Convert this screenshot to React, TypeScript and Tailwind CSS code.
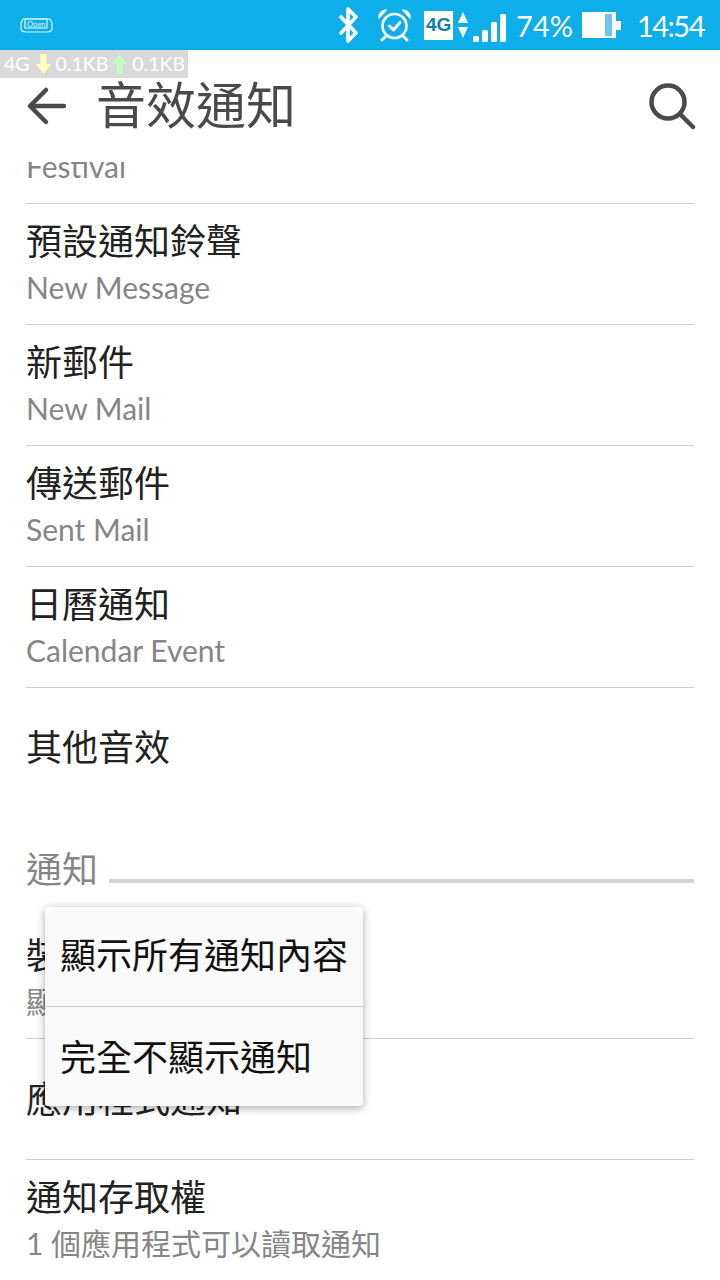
import { FC } from "react";

const cjk = "font-['Lato','Noto_Sans_CJK_TC',sans-serif]";

interface RowProps {
  title?: string;
  sub?: string;
}

const Row: FC<RowProps> = ({ title, sub }) => {
  return (
    <div className="h-[121px] border-b border-[#d2d2d2] flex flex-col justify-center">
      {title && <div className="text-[36px] leading-[46px] text-[#222222]">{title}</div>}
      {sub && <div className="text-[30px] leading-[46px] text-[#868686]">{sub}</div>}
    </div>
  );
};

const StatusBar = () => {
  return (
    <div className="h-[50px] bg-[#0eaeea] flex items-center pl-[20px] pr-[16px] text-white shrink-0">
      <svg width="33" height="16" viewBox="0 0 33 16" fill="none" stroke="#d8f4ff" strokeWidth="1.2">
        <path d="M3 2 H30 L32 6 V11 Q32 15 27 15 H6 Q1 15 1 11 V6 Z" />
        <rect x="5" y="2" width="22" height="9" />
        <text x="7" y="9.500" fontSize="7.500" fill="#d8f4ff" stroke="none">Open</text>
      </svg>
      <div className="ml-auto flex items-center">
        <svg width="24" height="36" viewBox="0 0 24 36" fill="none" stroke="white" strokeWidth="3.600" strokeLinecap="round" strokeLinejoin="round">
          <path d="M5 10 L20 26 L12 34 V2 L20 10 L5 26" />
        </svg>
        <svg className="ml-[17px]" width="35" height="34" viewBox="0 0 35 34" fill="none" stroke="white" strokeWidth="2.600" strokeLinecap="round" strokeLinejoin="round">
          <circle cx="17.500" cy="18" r="12" />
          <path d="M2 10 Q2 3 9 2 Z M33 10 Q33 3 26 2 Z" fill="white" strokeWidth="1.500" />
          <path d="M8 29 L5 32 M27 29 L30 32" strokeWidth="3" />
          <path d="M12.500 18 L16.500 22 L23 14.500" strokeWidth="3" />
        </svg>
        <div className="ml-[12px] w-[29px] h-[29px] bg-white flex items-center justify-center text-[#0e7ea8] text-[19px] font-bold font-['Liberation_Sans',sans-serif]">
          4G
        </div>
        <svg className="ml-[5px]" width="10" height="26" viewBox="0 0 10 26" fill="white">
          <path d="M5 0 L10 11 H0 Z M0 15 H10 L5 26 Z" />
        </svg>
        <svg className="ml-[5px] mt-[5px]" width="33" height="28" viewBox="0 0 33 28" fill="white">
          <rect x="0" y="22" width="6" height="6" rx="1.500" />
          <rect x="9" y="16" width="6" height="12" rx="1.500" />
          <rect x="18" y="8" width="6" height="20" rx="1.500" />
          <rect x="27" y="0" width="6" height="28" rx="1.500" />
        </svg>
        <span className="ml-[10px] text-[29px] leading-none font-['Lato',sans-serif]">74%</span>
        <div className="ml-[9px] flex items-center">
          <div className="w-[34px] h-[26px] bg-white flex justify-end pr-[4px] py-[2px]">
            <div className="w-[7px] bg-[#6cc6ee]" />
          </div>
          <div className="w-[5px] h-[9px] bg-white" />
        </div>
        <span className="ml-[16px] text-[29px] leading-none tracking-[-1.5px] font-['Lato',sans-serif]">14:54</span>
      </div>
    </div>
  );
};

const TrafficOverlay = () => {
  return (
    <div className="absolute left-0 top-[50px] w-[188px] h-[28px] bg-[#d9d9d9] flex items-center pl-[4px] text-white text-[19.5px] font-['Lato',sans-serif] z-20">
      <span>4G</span>
      <svg className="ml-[6px]" width="15" height="22" viewBox="0 0 15 22" fill="#ffffc0">
        <path d="M4.500 1 H10.500 V11 H15 L7.500 21 L0 11 H4.500 Z" />
      </svg>
      <span className="ml-[5px]">0.1KB</span>
      <svg className="ml-[4px]" width="15" height="22" viewBox="0 0 15 22" fill="#c0ffc0">
        <path d="M7.500 1 L15 11 H10.500 V21 H4.500 V11 H0 Z" />
      </svg>
      <span className="ml-[5px]">0.1KB</span>
    </div>
  );
};

const Header = () => {
  return (
    <div className="relative z-10 h-[112px] bg-white flex items-center pl-[26px] pr-[24px] shrink-0 text-[#4a4a4a]">
      <svg width="42" height="42" viewBox="0 0 42 42" fill="none" stroke="#4a4a4a" strokeWidth="4.500" strokeLinecap="round" strokeLinejoin="round">
        <path d="M38 21 H5 M20 5 L4 21 L20 37" />
      </svg>
      <span className="ml-[28px] mb-[3px] text-[50px] leading-none">音效通知</span>
      <svg className="ml-auto" width="48" height="48" viewBox="0 0 48 48" fill="none" stroke="#4a4a4a" strokeWidth="4.500" strokeLinecap="round">
        <circle cx="20" cy="20" r="16.500" />
        <path d="M32 32 L45 45" />
      </svg>
    </div>
  );
};

const Popup = () => {
  return (
    <div className="absolute left-[45px] top-[907px] w-[318px] h-[199px] bg-[#fafafa] rounded-[3px] shadow-[0_2px_8px_rgba(0,0,0,0.35)] z-20 text-[36px] text-[#111111] flex flex-col">
      <div className="h-[100px] flex items-center pl-[15px] pb-[3px] border-b border-[#cfcfcf]">顯示所有通知內容</div>
      <div className="flex-1 flex items-center pl-[15px] pt-[1px]">完全不顯示通知</div>
    </div>
  );
};

const App = () => {
  return (
    <div className={`relative w-[720px] h-[1280px] overflow-hidden bg-white flex flex-col ${cjk}`}>
      <StatusBar />
      <TrafficOverlay />
      <Header />
      <div className="mt-[-79px] mx-[26px]">
        <Row title="節慶" sub="Festival" />
        <Row title="預設通知鈴聲" sub="New Message" />
        <Row title="新郵件" sub="New Mail" />
        <Row title="傳送郵件" sub="Sent Mail" />
        <Row title="日曆通知" sub="Calendar Event" />
        <div className="h-[120px] flex items-center pb-[2px] text-[36px] text-[#222222]">其他音效</div>
        <div className="h-[110px] flex items-center gap-[11px] pt-[12px]">
          <span className="text-[36px] leading-none text-[#868686]">通知</span>
          <div className="flex-1 h-[4px] bg-[#d5d5d5] mt-[23px]" />
        </div>
        <Row title="裝置鎖定時" sub="顯示所有通知內容" />
        <Row title="應用程式通知" />
        <Row title="通知存取權" sub="1 個應用程式可以讀取通知" />
      </div>
      <Popup />
    </div>
  );
};

export default App;
